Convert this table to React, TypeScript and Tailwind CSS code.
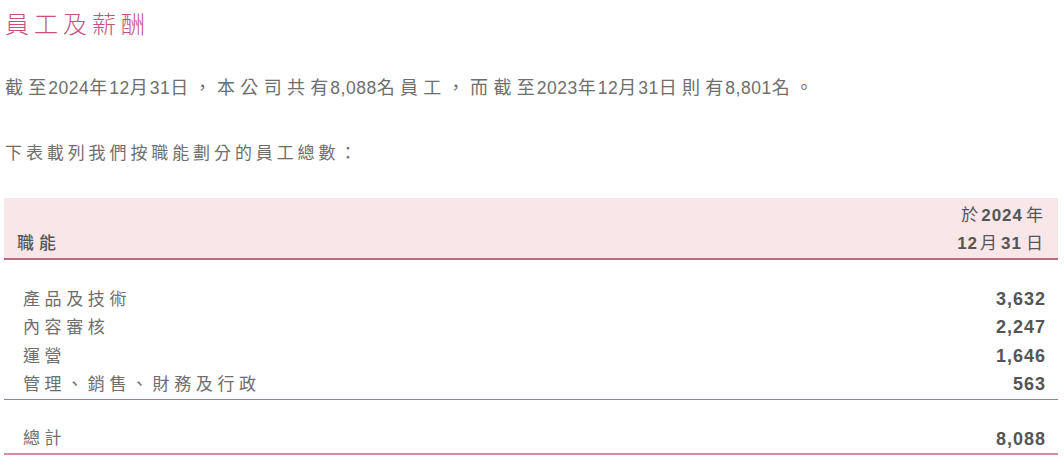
import React from 'react';

const rows = [
  { label: '產品及技術', value: '3,632' },
  { label: '內容審核', value: '2,247' },
  { label: '運營', value: '1,646' },
  { label: '管理、銷售、財務及行政', value: '563' },
];

const font = { fontFamily: '"Liberation Sans", "Noto Sans CJK TC", sans-serif' };

const CJK = /[\u3000-\u9fff\uff00-\uffef]/;

// CJK runs get wide tracking, digits stay tight like the printed report
const Mixed = ({ text }: { text: string }) => {
  const parts = text.split(/([\u3000-\u9fff\uff00-\uffef]+)/).filter(Boolean);
  return (
    <>
      {parts.map((p, i) => {
        if (!CJK.test(p)) {
          return <span key={i} className="text-[17.5px] tracking-[0.5px]">{p}</span>;
        }
        const last = i === parts.length - 1;
        return (
          <span key={i} className="text-[18px] tracking-[5.35px]">
            {last ? p : p.slice(0, -1)}
            {!last && <span className="tracking-[2px]">{p.slice(-1)}</span>}
          </span>
        );
      })}
    </>
  );
};

export default function App() {
  return (
    <div className="w-[1064px] h-[465px] bg-white overflow-hidden" style={font}>
      {/* Title */}
      <h1 className="pl-[5px] pt-[10px] text-[24px] leading-[30px] tracking-[5px] text-[#c94f7c] font-light">
        員工及薪酬
      </h1>

      <p className="pl-[5px] mt-[35px] leading-[26px] text-[#6e6e6e] whitespace-nowrap">
        <Mixed text="截至2024年12月31日，本公司共有8,088名員工，而截至2023年12月31日則有8,801名。" />
      </p>

      <p className="pl-[5px] mt-[39px] text-[17px] leading-[26px] tracking-[3.9px] text-[#6e6e6e]">
        下表載列我們按職能劃分的員工總數：
      </p>

      {/* Table */}
      <div className="ml-[4px] mr-[6px] mt-[31px]">
        <div className="h-[62px] bg-[#f9e6e9] border-b-2 border-[#bb6a82] flex items-end justify-between pl-[13px] pr-[15px]">
          <span className="text-[17px] leading-[28px] text-[#555555] tracking-[5px] font-medium">職能</span>
          <div className="flex flex-col items-end text-[17px] leading-[28px] text-[#555555]">
            <span>
              於<b className="font-bold tracking-[1px] mx-[3px]">2024</b>年
            </span>
            <span>
              <b className="font-bold tracking-[1px] mr-[2px]">12</b>月
              <b className="font-bold tracking-[1px] mx-[4px]">31</b>日
            </span>
          </div>
        </div>

        <div className="pt-[25px] border-b border-[#ad7484]">
          {rows.map((r) => (
            <div key={r.label} className="flex justify-between items-center h-[28.5px] pl-[19px] pr-[12px]">
              <span className="text-[17px] tracking-[4.6px] text-[#6e6e6e]">{r.label}</span>
              <span className="text-[18px] tracking-[1px] font-bold text-[#555555]">{r.value}</span>
            </div>
          ))}
        </div>

        <div className="pt-[25px] border-b-2 border-[#d88aa5]">
          <div className="flex justify-between items-center h-[28px] pl-[19px] pr-[12px]">
            <span className="text-[17px] tracking-[4.6px] text-[#6e6e6e]">總計</span>
            <span className="text-[18px] tracking-[1px] font-bold text-[#555555]">8,088</span>
          </div>
        </div>
      </div>
    </div>
  );
}
